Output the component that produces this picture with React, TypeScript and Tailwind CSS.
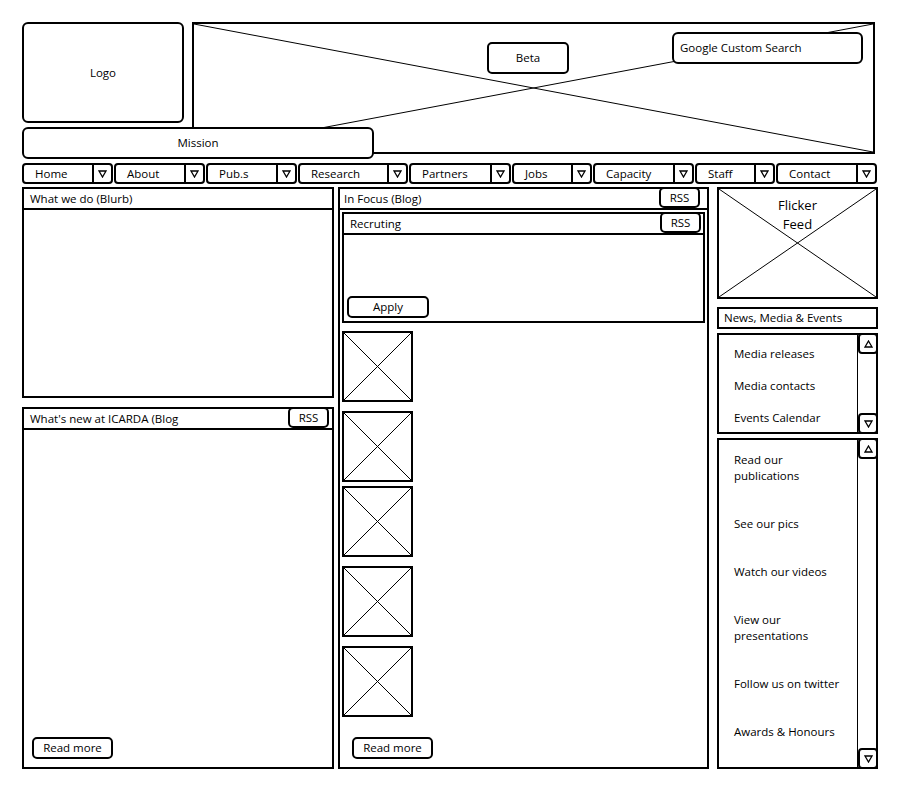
import React from "react";

const XLines = () => (
  <svg className="absolute inset-0 w-full h-full" viewBox="0 0 100 100" preserveAspectRatio="none">
    <line x1="0" y1="0" x2="100" y2="100" stroke="black" strokeWidth="1" vectorEffect="non-scaling-stroke" />
    <line x1="0" y1="100" x2="100" y2="0" stroke="black" strokeWidth="1" vectorEffect="non-scaling-stroke" />
  </svg>
);

const Tri = ({ up }: { up?: boolean }) => (
  <svg width="9" height="8" viewBox="0 0 9 8">
    {up ? (
      <polygon points="4.5,1 8,7 1,7" fill="none" stroke="black" strokeWidth="1.3" />
    ) : (
      <polygon points="1,1 8,1 4.5,7" fill="none" stroke="black" strokeWidth="1.3" />
    )}
  </svg>
);

const Btn = ({ label, className }: { label: string; className: string }) => (
  <div className={"border-2 border-black rounded-[5px] bg-white flex items-center justify-center h-[22px] " + className}>
    {label}
  </div>
);

const PanelHead = ({ title, rss, mr = "mr-[3px]", pl = "pl-[6px]" }: { title: string; rss?: boolean; mr?: string; pl?: string }) => (
  <div className={"flex items-stretch justify-between h-[21px] border-b-2 border-black shrink-0 " + pl}>
    <span className="flex items-center">{title}</span>
    {rss && (
      <div className={"border-2 border-black rounded-[5px] w-[41px] -mt-[2px] h-[21px] flex items-center justify-center bg-white " + mr}>
        RSS
      </div>
    )}
  </div>
);

const navItems = [
  { label: "Home", w: "w-[91px]" },
  { label: "About", w: "w-[91px]" },
  { label: "Pub.s", w: "w-[91px]" },
  { label: "Research", w: "w-[110px]" },
  { label: "Partners", w: "w-[102px]" },
  { label: "Jobs", w: "w-[80px]" },
  { label: "Capacity", w: "w-[101px]" },
  { label: "Staff", w: "w-[80px]" },
  { label: "Contact", w: "w-[101px]" },
];

const ImgBox = ({ mt }: { mt: string }) => (
  <div className={"relative w-[71px] h-[71px] border-2 border-black shrink-0 " + mt}>
    <XLines />
  </div>
);

const ScrollList = ({ items, h, pt, gap }: { items: string[][]; h: string; pt: string; gap: string }) => (
  <div className={"relative border-2 border-black flex " + h}>
    <div className={"flex-1 flex flex-col pl-[15px] leading-[16px] " + pt + " " + gap}>
      {items.map((it, i) => (
        <div key={i}>
          {it.map((l, j) => (
            <div key={j}>{l}</div>
          ))}
        </div>
      ))}
    </div>
    <div className="w-[21px] border-l border-black flex flex-col justify-between -my-[2px] -mr-[2px]">
      <div className="h-[21px] border-2 border-black rounded-[4px] bg-white flex items-center justify-center">
        <Tri up />
      </div>
      <div className="h-[21px] border-2 border-black rounded-[4px] bg-white flex items-center justify-center">
        <Tri />
      </div>
    </div>
  </div>
);

export default function App() {
  return (
    <div className="w-[900px] h-[790px] bg-white text-black pl-[22px] pt-[22px] text-[11.5px]" style={{ fontFamily: '"Open Sans", sans-serif' }}>
      {/* header */}
      <div className="relative h-[141px]">
        <div className="flex gap-[8px]">
          <div className="w-[162px] h-[101px] border-2 border-black rounded-[6px] flex items-center justify-center">Logo</div>
          <div className="relative w-[683px] h-[132px] border-2 border-black">
            <XLines />
            <Btn label="Beta" className="absolute left-[293px] top-[18px] w-[82px] h-[32px]" />
            <div className="absolute left-[478px] top-[8px] w-[191px] h-[32px] border-2 border-black rounded-[6px] bg-white flex items-center pl-[6px]">
              Google Custom Search
            </div>
          </div>
        </div>
        <div className="absolute left-0 top-[105px] w-[352px] h-[32px] border-2 border-black rounded-[6px] bg-white flex items-center justify-center">
          Mission
        </div>
      </div>

      {/* nav */}
      <div className="flex gap-[1px] h-[21px]">
        {navItems.map((n) => (
          <div key={n.label} className={"flex border-2 border-black rounded-[4px] " + n.w}>
            <div className="flex-1 flex items-center pl-[11px]">{n.label}</div>
            <div className="w-[19px] border-l-2 border-black flex items-center justify-center">
              <Tri />
            </div>
          </div>
        ))}
      </div>

      {/* main */}
      <div className="flex mt-[3px] h-[582px]">
        <div className="w-[312px] flex flex-col gap-[9px]">
          <div className="h-[211px] border-2 border-black flex flex-col">
            <PanelHead title="What we do (Blurb)" />
          </div>
          <div className="flex-1 border-2 border-black flex flex-col">
            <PanelHead title="What's new at ICARDA (Blog" rss />
            <div className="flex-1" />
            <Btn label="Read more" className="w-[81px] ml-[8px] mb-[8px]" />
          </div>
        </div>

        <div className="w-[371px] ml-[4px] border-2 border-black flex flex-col">
          <PanelHead title="In Focus (Blog)" rss mr="mr-[7px]" pl="pl-[4px]" />
          <div className="px-[2px] pt-[2px] flex flex-col flex-1">
            <div className="h-[111px] border-2 border-black flex flex-col">
              <PanelHead title="Recruting" rss mr="mr-[2px]" />
              <div className="flex-1" />
              <Btn label="Apply" className="w-[82px] ml-[3px] mb-[3px]" />
            </div>
            <ImgBox mt="mt-[8px]" />
            <ImgBox mt="mt-[9px]" />
            <ImgBox mt="mt-[4px]" />
            <ImgBox mt="mt-[9px]" />
            <ImgBox mt="mt-[9px]" />
            <div className="flex-1" />
            <Btn label="Read more" className="w-[81px] ml-[10px] mb-[8px]" />
          </div>
        </div>

        <div className="w-[161px] ml-[8px] flex flex-col">
          <div className="relative h-[112px] border-2 border-black">
            <XLines />
            <div className="relative text-center text-[13px] leading-[19px] pt-[7px]">
              <div>Flicker</div>
              <div>Feed</div>
            </div>
          </div>
          <div className="mt-[8px] h-[22px] border-2 border-black flex items-center pl-[5px]">News, Media &amp; Events</div>
          <div className="mt-[4px]">
            <ScrollList
              items={[["Media releases"], ["Media contacts"], ["Events Calendar"]]}
              h="h-[101px]"
              pt="pt-[11px]"
              gap="gap-[16px]"
            />
          </div>
          <div className="mt-[4px] flex-1 flex flex-col">
            <ScrollList
              items={[
                ["Read our", "publications"],
                ["See our pics"],
                ["Watch our videos"],
                ["View our", "presentations"],
                ["Follow us on twitter"],
                ["Awards & Honours"],
              ]}
              h="flex-1"
              pt="pt-[12px]"
              gap="gap-[32px]"
            />
          </div>
        </div>
      </div>
    </div>
  );
}
